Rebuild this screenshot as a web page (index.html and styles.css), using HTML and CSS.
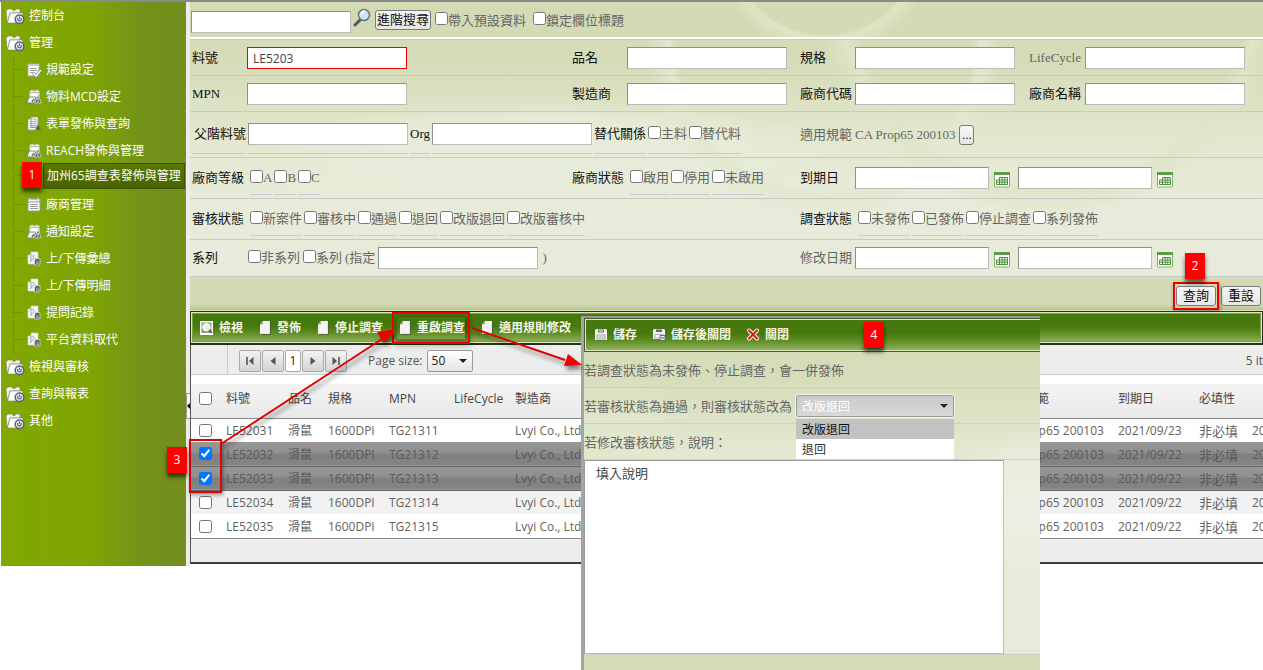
FILE: index.html
```html
<!DOCTYPE html>
<html lang="zh-Hant">
<head>
<meta charset="utf-8">
<title>加州65調查表發佈與管理</title>
<link rel="stylesheet" href="styles.css">
</head>
<body>
<svg class="defs" width="0" height="0" aria-hidden="true">
  <symbol id="i-folder" viewBox="0 0 20 18">
    <path d="M1 4 L3 2 H7 L8 3.5 H10 L11 2 H15 V6 H5 L3 14 H2Z" fill="#f2f2ee" stroke="#7b8360" stroke-width=".6"/>
    <path d="M5 6 H18 L16 16 H2.5Z" fill="#fff" stroke="#7b8360" stroke-width=".6"/>
    <circle cx="14.5" cy="12.3" r="4.3" fill="#e4e7ee" stroke="#5b647a" stroke-width="1.6"/>
    <path d="M12.8 11 V13 Q14.5 14.6 16.2 13 V11 M14.5 9.6 V12" fill="none" stroke="#5b647a" stroke-width="1.1"/>
  </symbol>
  <symbol id="i-check" viewBox="0 0 16 16">
    <path d="M2 2 H13 V14 H2Z" fill="#fff" stroke="#aaa" /><path d="M2 2 H13 V4 H2Z" fill="#c8c8c8"/>
    <path d="M4 6.5 H11 M4 8.5 H11 M4 10.5 H8" stroke="#999"/>
    <path d="M7 11 L10 14 L15 8" fill="none" stroke="#777" stroke-width="3"/><path d="M7 11 L10 14 L15 8" fill="none" stroke="#fff" stroke-width="1.7"/>
  </symbol>
  <symbol id="i-warn" viewBox="0 0 16 16">
    <path d="M4 2 H13 V9 H4Z" fill="#fff" stroke="#ddd"/><path d="M4 3.5 H13" stroke="#bbb" stroke-width="1.5"/><path d="M6 .8 V3 M11 .8 V3" stroke="#eee"/>
    <path d="M3 8 H10 L8 14 H1Z" fill="#f4f4f4" stroke="#777" stroke-width=".8"/><path d="M8 10 L6 13" stroke="#555" stroke-width="1.3"/>
    <path d="M12 6 L15.5 14 H8.5Z" fill="#666d7a" stroke="#ddd" stroke-width=".7"/><path d="M12 9 V11.5 M12 12.3 V13.3" stroke="#fff"/>
  </symbol>
  <symbol id="i-pages" viewBox="0 0 16 16">
    <path d="M5 1 H12 V11 H5Z M2 3 H10 V14 H2Z" fill="#fff" stroke="#999" stroke-width=".8"/>
    <path d="M4 5.5 H9 M4 7.5 H9 M4 9.5 H9 M4 11.5 H9" stroke="#888" stroke-width=".8"/><path d="M9.5 14 L12 8 L15 14Z" fill="#5d6470"/>
  </symbol>
  <symbol id="i-list" viewBox="0 0 16 16">
    <path d="M2 2 H14 V14 H2Z" fill="#fff" stroke="#999"/><path d="M2 2 H14 V5 H2Z" fill="#eee" stroke="#999"/><path d="M4 1 V3 M12 1 V3" stroke="#ddd"/>
    <path d="M4 7.5 H12 M4 9.5 H12 M4 11.5 H12" stroke="#999"/>
  </symbol>
  <symbol id="i-transfer" viewBox="0 0 16 16">
    <path d="M5 1 H12 V10 H5Z M2 4 H9 V13 H2Z" fill="#fff" stroke="#ccc" stroke-width=".8"/>
    <circle cx="6" cy="6.5" r="1.8" fill="none" stroke="#999" stroke-width=".8"/><path d="M4 11 L6 8.5" stroke="#999"/>
    <path d="M9.5 7.5 H14 V14 H8.5 V10Z" fill="#5d6470" stroke="#ddd" stroke-width=".7"/><path d="M10 11 H13 M10 12.6 H13" stroke="#ccc" stroke-width=".7"/>
  </symbol>
  <symbol id="i-view" viewBox="0 0 16 16">
    <path d="M1 1 H14 V15 H1Z" fill="#fff"/><path d="M2.5 2.5 H12.5 V13 H2.5Z" fill="#8b9a78"/>
    <circle cx="7.5" cy="7.2" r="3.8" fill="#eee" stroke="#fff"/><path d="M10 10 L13 13" stroke="#555" stroke-width="1.6"/>
  </symbol>
  <symbol id="i-doc" viewBox="0 0 16 16">
    <path d="M6 1 H13 V14 H3 V4.5Z" fill="#f5f5f5"/><path d="M6 1 V4.5 H3Z" fill="#a9b298"/><path d="M13.4 2 V14.4 H4" fill="none" stroke="#4a5838" stroke-width=".8"/>
  </symbol>
  <symbol id="i-save" viewBox="0 0 16 16">
    <path d="M3 2 H13 L14 3 V13 H2 V3Z" fill="#f3f3f3"/><path d="M5 2.5 H11 V5.5 H5Z" fill="#667"/><path d="M7 3 V5 M9 3 V5" stroke="#fff"/><path d="M4 8 H12 V12 H4Z" fill="#fff" stroke="#88907f" stroke-width=".8"/><path d="M5 10 H11" stroke="#88907f" stroke-width=".8"/>
  </symbol>
  <symbol id="i-saveclose" viewBox="0 0 16 16">
    <path d="M3 2 H13 L14 3 V12 H2 V3Z" fill="#f3f3f3"/><path d="M5 2.5 H11 V5 H5Z" fill="#667"/><path d="M4 7.5 H12 V11 H4Z" fill="#fff" stroke="#99a" stroke-width=".8"/><path d="M9 8.5 H14 V13.5 H9Z" fill="#eee" stroke="#556" stroke-width=".8"/><path d="M10.3 9.8 L12.7 12.2 M12.7 9.8 L10.3 12.2" stroke="#556" stroke-width=".8"/>
  </symbol>
  <symbol id="i-close" viewBox="0 0 16 16">
    <path d="M4 3.5 L12 11.5 M12 3.5 L4 11.5" stroke="#fff" stroke-width="4" stroke-linecap="round"/><path d="M4 3.5 L12 11.5 M12 3.5 L4 11.5" stroke="#d51f14" stroke-width="2.2" stroke-linecap="round"/>
  </symbol>
  <symbol id="i-cal" viewBox="0 0 16 16">
    <rect x=".5" y=".5" width="15" height="14.5" rx="1" fill="#fff" stroke="#7bb068"/><path d="M0 0 H16 V3 H0Z" fill="#5b9b49"/>
    <path d="M5.5 5.5 H13.5 V12.5 H2.5 V8 H13.5 M2.5 10.2 H13.5 M5.5 5.5 V12.5 M8.2 5.5 V12.5 M10.8 5.5 V12.5" fill="none" stroke="#4c8f3c" stroke-width="1"/>
  </symbol>
</svg>

<div class="page">
  <div class="frame">
    <nav class="side">
      <ul class="tree">
        <li><a href="#"><svg class="fold"><use href="#i-folder"/></svg>控制台</a></li>
        <li><a href="#"><svg class="fold"><use href="#i-folder"/></svg>管理</a>
          <ul class="sub">
            <li><a href="#"><svg class="ico"><use href="#i-check"/></svg><span>規範設定</span></a></li>
            <li><a href="#"><svg class="ico"><use href="#i-warn"/></svg><span>物料MCD設定</span></a></li>
            <li><a href="#"><svg class="ico"><use href="#i-pages"/></svg><span>表單發佈與查詢</span></a></li>
            <li><a href="#"><svg class="ico"><use href="#i-warn"/></svg><span>REACH發佈與管理</span></a></li>
            <li class="current"><a href="#"><svg class="ico"><use href="#i-warn"/></svg><span>加州65調查表發佈與管理</span></a><b class="badge b1">1</b></li>
            <li><a href="#"><svg class="ico"><use href="#i-list"/></svg><span>廠商管理</span></a></li>
            <li><a href="#"><svg class="ico"><use href="#i-warn"/></svg><span>通知設定</span></a></li>
            <li><a href="#"><svg class="ico"><use href="#i-transfer"/></svg><span>上/下傳彙總</span></a></li>
            <li><a href="#"><svg class="ico"><use href="#i-transfer"/></svg><span>上/下傳明細</span></a></li>
            <li><a href="#"><svg class="ico"><use href="#i-transfer"/></svg><span>提問記錄</span></a></li>
            <li><a href="#"><svg class="ico"><use href="#i-transfer"/></svg><span>平台資料取代</span></a></li>
          </ul>
        </li>
        <li><a href="#"><svg class="fold"><use href="#i-folder"/></svg>檢視與審核</a></li>
        <li><a href="#"><svg class="fold"><use href="#i-folder"/></svg>查詢與報表</a></li>
        <li><a href="#"><svg class="fold"><use href="#i-folder"/></svg>其他</a></li>
      </ul>
    </nav>
    <div class="splitter"><button class="handle" aria-label="收合"></button></div>

    <main class="main">
      <div class="quick">
        <input class="box" type="text" aria-label="關鍵字">
        <svg class="lens" viewBox="0 0 18 20"><path d="M8 11 L2 17" stroke="#555" stroke-width="3" stroke-linecap="round"/><circle cx="11" cy="7" r="5.5" fill="#cfe4f5" stroke="#6e7780" stroke-width="1.6"/><path d="M8 6 A4 4 0 0 1 12 3.4" fill="none" stroke="#fff" stroke-width="1.6"/></svg>
        <button class="btn">進階搜尋</button>
        <label class="chk"><input type="checkbox">帶入預設資料</label>
        <label class="chk lock"><input type="checkbox">鎖定欄位標題</label>
      </div>

      <form class="query">
        <div class="row">
          <label for="q1">料號</label><div class="cell"><input id="q1" class="box hot" type="text" value="LE5203"></div>
          <label for="q2">品名</label><div class="cell"><input id="q2" class="box" type="text"></div>
          <label for="q3">規格</label><div class="cell"><input id="q3" class="box" type="text"></div>
          <label for="q4" class="dim">LifeCycle</label><div class="cell"><input id="q4" class="box" type="text"></div>
        </div>
        <div class="row">
          <label for="q5">MPN</label><div class="cell"><input id="q5" class="box" type="text"></div>
          <label for="q6">製造商</label><div class="cell"><input id="q6" class="box" type="text"></div>
          <label for="q7">廠商代碼</label><div class="cell"><input id="q7" class="box" type="text"></div>
          <label for="q8">廠商名稱</label><div class="cell"><input id="q8" class="box" type="text"></div>
        </div>
        <div class="row tall">
          <div class="cell parent">
            <label for="q9" class="under first">父階料號</label><span class="under"><input id="q9" class="box" type="text"></span>
            <label for="q10" class="under">Org</label><span class="under"><input id="q10" class="box" type="text"></span>
            <span class="under">替代關係</span>
            <label class="chk under alt"><input type="checkbox">主料</label><label class="chk under"><input type="checkbox">替代料</label>
          </div>
          <span class="dim">適用規範</span>
          <div class="cell rest dim rule">CA Prop65 200103 <button type="button" class="btn dots">...</button></div>
        </div>
        <div class="row mid">
          <span>廠商等級</span>
          <div class="cell checks"><label class="chk under"><input type="checkbox">A</label><label class="chk under"><input type="checkbox">B</label><label class="chk under"><input type="checkbox">C</label></div>
          <span>廠商狀態</span>
          <div class="cell checks"><label class="chk under"><input type="checkbox">啟用</label><label class="chk under"><input type="checkbox">停用</label><label class="chk under"><input type="checkbox">未啟用</label></div>
          <label for="d1">到期日</label>
          <div class="cell rest dates"><input id="d1" class="box" type="text"><button type="button" class="cal" aria-label="日曆"><svg><use href="#i-cal"/></svg></button><input class="box" type="text" aria-label="到期日迄"><button type="button" class="cal" aria-label="日曆"><svg><use href="#i-cal"/></svg></button></div>
        </div>
        <div class="row mid">
          <span>審核狀態</span>
          <div class="cell checks wide"><label class="chk under"><input type="checkbox">新案件</label><label class="chk under"><input type="checkbox">審核中</label><label class="chk under"><input type="checkbox">通過</label><label class="chk under"><input type="checkbox">退回</label><label class="chk under"><input type="checkbox">改版退回</label><label class="chk under"><input type="checkbox">改版審核中</label></div>
          <span>調查狀態</span>
          <div class="cell rest checks"><label class="chk under"><input type="checkbox">未發佈</label><label class="chk under"><input type="checkbox">已發佈</label><label class="chk under"><input type="checkbox">停止調查</label><label class="chk under"><input type="checkbox">系列發佈</label></div>
        </div>
        <div class="row last">
          <span>系列</span>
          <div class="cell wide series"><label class="chk"><input type="checkbox">非系列</label><label class="chk"><input type="checkbox">系列</label><label for="s1" class="dim">(指定</label><input id="s1" class="box" type="text"><span class="dim">)</span></div>
          <label for="d3" class="dim">修改日期</label>
          <div class="cell rest dates"><input id="d3" class="box" type="text"><button type="button" class="cal" aria-label="日曆"><svg><use href="#i-cal"/></svg></button><input class="box" type="text" aria-label="修改日期迄"><button type="button" class="cal" aria-label="日曆"><svg><use href="#i-cal"/></svg></button></div>
        </div>
        <div class="actions">
          <span class="marked"><button type="button" class="btn big">查詢</button><b class="badge b2">2</b></span>
          <button type="reset" class="btn big">重設</button>
        </div>
      </form>

      <div class="bar">
        <button><svg class="ico"><use href="#i-view"/></svg>檢視</button>
        <button><svg class="ico"><use href="#i-doc"/></svg>發佈</button>
        <button><svg class="ico"><use href="#i-doc"/></svg>停止調查</button>
        <button class="ring"><svg class="ico"><use href="#i-doc"/></svg>重啟調查</button>
        <button><svg class="ico"><use href="#i-doc"/></svg>適用規則修改</button>
      </div>

      <section class="grid">
        <div class="pager">
          <span class="gutter"></span>
          <button aria-label="首頁"><svg viewBox="0 0 10 10"><path d="M2 1 V9" stroke="#555" stroke-width="1.6"/><path d="M8.5 1 V9 L4 5Z" fill="#555"/></svg></button>
          <button aria-label="上一頁"><svg viewBox="0 0 10 10"><path d="M7.5 1 V9 L2.5 5Z" fill="#555"/></svg></button>
          <button class="on">1</button>
          <button aria-label="下一頁"><svg viewBox="0 0 10 10"><path d="M2.5 1 V9 L7.5 5Z" fill="#555"/></svg></button>
          <button aria-label="末頁"><svg viewBox="0 0 10 10"><path d="M8 1 V9" stroke="#555" stroke-width="1.6"/><path d="M1.5 1 V9 L6 5Z" fill="#555"/></svg></button>
          <label for="ps">Page size:</label>
          <select id="ps" class="size"><option>50</option></select>
          <span class="count">5 it</span>
        </div>
        <div class="scroll">
          <table>
            <colgroup><col class="c1"><col class="c2"><col class="c3"><col class="c4"><col class="c5"><col class="c6"><col><col class="c8"><col class="c9"><col class="c10"><col class="c11"></colgroup>
            <thead><tr><th><input type="checkbox" aria-label="全選"></th><th>料號</th><th>品名</th><th>規格</th><th>MPN</th><th>LifeCycle</th><th>製造商</th><th>適用規範</th><th>到期日</th><th>必填性</th><th></th></tr></thead>
            <tbody>
              <tr><td><input type="checkbox" aria-label="LE52031"></td><td>LE52031</td><td>滑鼠</td><td>1600DPI</td><td>TG21311</td><td></td><td>Lvyi Co., Ltd.</td><td>CA Prop65 200103</td><td>2021/09/23</td><td class="req">非必填</td><td>20</td></tr>
              <tr class="sel"><td><input type="checkbox" checked aria-label="LE52032"></td><td>LE52032</td><td>滑鼠</td><td>1600DPI</td><td>TG21312</td><td></td><td>Lvyi Co., Ltd.</td><td>CA Prop65 200103</td><td>2021/09/22</td><td class="req">非必填</td><td>20</td></tr>
              <tr class="sel"><td><input type="checkbox" checked aria-label="LE52033"></td><td>LE52033</td><td>滑鼠</td><td>1600DPI</td><td>TG21313</td><td></td><td>Lvyi Co., Ltd.</td><td>CA Prop65 200103</td><td>2021/09/22</td><td class="req">非必填</td><td>20</td></tr>
              <tr class="odd"><td><input type="checkbox" aria-label="LE52034"></td><td>LE52034</td><td>滑鼠</td><td>1600DPI</td><td>TG21314</td><td></td><td>Lvyi Co., Ltd.</td><td>CA Prop65 200103</td><td>2021/09/22</td><td class="req">非必填</td><td>20</td></tr>
              <tr><td><input type="checkbox" aria-label="LE52035"></td><td>LE52035</td><td>滑鼠</td><td>1600DPI</td><td>TG21315</td><td></td><td>Lvyi Co., Ltd.</td><td>CA Prop65 200103</td><td>2021/09/22</td><td class="req">非必填</td><td>20</td></tr>
            </tbody>
          </table>
        </div>
        <div class="foot"></div>
      </section>
    </main>
  </div>

  <section class="dialog">
    <div class="bar dbar">
      <button><svg class="ico"><use href="#i-save"/></svg>儲存</button>
      <button><svg class="ico"><use href="#i-saveclose"/></svg>儲存後關閉</button>
      <button><svg class="ico"><use href="#i-close"/></svg>關閉</button>
      <b class="badge b4">4</b>
    </div>
    <p class="line">若調查狀態為未發佈、停止調查，會一併發佈</p>
    <div class="line"><label for="st">若審核狀態為通過，則審核狀態改為</label>
      <div class="combo">
        <select id="st"><option>改版退回</option><option>退回</option></select>
        <ul class="menu"><li class="on">改版退回</li><li>退回</li></ul>
      </div>
    </div>
    <label class="line" for="memo">若修改審核狀態，說明：</label>
    <textarea id="memo">填入說明</textarea>
    <div class="tail"></div>
  </section>

  <div class="badge b3">3</div>
  <div class="pick"></div>
  <svg class="arrows" width="600" height="500" viewBox="0 0 600 500" aria-hidden="true">
    <path d="M221 444 L382 339" stroke="#e00000" stroke-width="2"/><path d="M396 329 L384 343 L377 332Z" fill="#f00000"/>
    <path d="M472 328 L565 360" stroke="#e00000" stroke-width="2"/><path d="M582 365 L564 366 L568 354Z" fill="#f00000"/>
  </svg>
</div>
</body>
</html>
```
FILE: styles.css
```css
* { box-sizing: border-box; }
body {
  margin: 0;
  background: #fff;
  font: 12px/16px "Open Sans", "Noto Sans CJK TC", sans-serif;
  color: #555;
}
ul { list-style: none; margin: 0; padding: 0; }
a { color: inherit; text-decoration: none; }
button, input, select, textarea { font: inherit; color: inherit; margin: 0; }
input[type="checkbox"] { width: 13px; height: 13px; flex: none; }
.defs { position: absolute; }
.page { position: relative; min-height: 100vh; overflow: hidden; }
.frame { display: flex; border-top: 2px solid #8a8a8a; padding-left: 1px; }
.ico { width: 16px; height: 16px; flex: none; }

/* sidebar */
.side {
  width: 185px;
  flex: none;
  background: linear-gradient(90deg, #80a800 0, #7fa503 48%, #73911b 78%, #738e1c 100%);
  color: #fff;
}
.tree a { display: flex; align-items: center; height: 27px; gap: 4px; padding-left: 4px; white-space: nowrap; }
.fold { width: 20px; height: 18px; flex: none; }
.sub { margin-left: 12px; border-left: 1px dotted #5f7d10; }
.sub li { position: relative; }
.sub a { padding-left: 11px; gap: 0; }
.sub span { padding: 4px; }
.sub a::before { content: ""; width: 9px; margin-left: -10px; margin-right: 2px; border-top: 1px dotted #5f7d10; }
.sub .current a { padding-bottom: 4px; }
.sub .current span {
  padding: 4px 3px;
  margin-left: 2px;
  background: linear-gradient(#587a00, #476300);
  outline: 1px solid #3c5200;
}

.splitter { width: 4px; flex: none; background: #ececec; display: flex; align-items: flex-start; padding-top: 391px; }
.handle { width: 4px; height: 26px; padding: 0; border: 1px solid #999; border-right: 0; background: #fafafa; display: flex; align-items: center; }
.handle::before { content: ""; border: 3px solid transparent; border-right-color: #000; border-left: 0; }

/* query form */
.main { flex: 1; min-width: 0; padding-bottom: 2px; }
.quick {
  display: flex;
  align-items: center;
  height: 37px;
  padding-left: 1px;
  background:
    radial-gradient(circle at 635px -60px, transparent 92px, #dee5c6 96px, transparent 112px),
    #d3dbb5;
  border-bottom: 2px solid #fff;
  font-size: 13px;
}
.box {
  width: 160px;
  height: 22px;
  border: 1px solid #8f8f8f;
  border-right-color: #bbb;
  border-bottom-color: #bbb;
  background: #fff;
  padding: 3px 5px 1px;
  font: 12px/16px "Open Sans", "Noto Sans CJK TC", sans-serif;
  color: #444;
}
.box.hot { border-color: #f00000; }
.quick .box { margin-top: 4px; }
.lens { width: 18px; height: 20px; margin: 0 4px 4px 2px; }
.btn {
  height: 20px;
  padding: 0 1px;
  border: 1px solid #7a7a7a;
  border-radius: 3px;
  background: linear-gradient(#f6f6f6, #e6e6e6);
  font: 13px/16px "Liberation Serif", "Noto Sans CJK TC", serif;
  color: #111;
  white-space: nowrap;
}
.chk { display: inline-flex; align-items: center; color: #666; white-space: nowrap; }
.chk input { margin-bottom: 3px; }
.quick .chk { margin-left: 4px; }
.quick .lock { margin-left: 7px; }
.query {
  font: 13px/18px "Liberation Serif", "Noto Sans CJK TC", serif;
  color: #111;
  border-top: 1px solid #c6c8c6;
  background:
    radial-gradient(circle at 635px 0, transparent 148px, #e2e8d0 156px, transparent 180px),
    radial-gradient(circle at 860px -60px, transparent 200px, #dee5c8 212px, transparent 236px),
    radial-gradient(ellipse 300px 60px at 360px 120px, #e6ecd9 60%, transparent 100%),
    linear-gradient(#d4dbb5 0, #d6ddba 30px, #e5e9d2 110px, #e8ebda 180px);
}
.row {
  display: grid;
  grid-template-columns: 55px 325fr 55px 173fr 55px 174fr 56px 178fr;
  align-items: center;
  height: 36px;
  padding-left: 2px;
  border-bottom: 1px solid #c8cac8;
  white-space: nowrap;
}
.row.tall { height: 46px; }
.row.mid { height: 41px; }
.row.last { height: 37px; }
.cell { display: flex; align-items: center; align-self: stretch; }
.dim { color: #666; }
.parent { grid-column: span 4; gap: 2px; }
.rest { grid-column: span 3; }
.wide { grid-column: span 3; }
.under {
  align-self: stretch;
  display: flex;
  align-items: center;
  margin-bottom: 3px;
  padding-top: 3px;
  border-bottom: 1px solid #cbcbd0;
}
.first { padding-left: 2px; }
.checks { gap: 2px; padding-left: 3px; }
.series { gap: 3px; padding-left: 1px; }
.series .box { margin-right: 1px; }
.rule { gap: 4px; }
.dots { width: 15px; padding: 0; }
.dates .box { width: 134px; }
.cal { width: 16px; height: 16px; padding: 0; border: 0; background: none; margin: 3px 8px 0 5px; }
.cal svg { width: 16px; height: 16px; display: block; }
.actions {
  display: flex;
  justify-content: flex-end;
  align-items: center;
  gap: 2px;
  height: 34px;
  padding: 3px 2px 0 0;
  background: linear-gradient(#d3dab5 80%, #bcc791 96%, #eef0da);
}
.big { padding: 0 6px; }
.marked { position: relative; border: 2px solid #f00000; padding: 2px 1px; display: flex; box-shadow: 1px 2px 4px #0006; }

/* toolbars */
.bar {
  display: flex;
  align-items: center;
  gap: 14px;
  height: 34px;
  padding: 1px 0 0 8px;
  border: 1px solid #26301c;
  border-bottom-width: 2px;
  box-shadow: inset 0 0 0 1px #dfe8bf, inset 0 0 0 2px #7ea043;
  background: linear-gradient(#46790d 45%, #5b8a20 65%, #94b463);
  position: relative;
}
.bar button {
  display: flex;
  align-items: center;
  gap: 4px;
  padding: 0;
  border: 0;
  background: none;
  color: #f4f7ea;
  font-weight: 600;
  white-space: nowrap;
}
.bar button.ring { outline: 2px solid #f00000; outline-offset: 3px; padding: 3px 0; box-shadow: 2px 3px 6px 3px #0005; }
.grid { border-left: 1px solid #555; border-bottom: 2px solid #3e3e3e; }
.pager { display: flex; align-items: center; height: 30px; background: #ededed; border-bottom: 1px solid #ccc; overflow: hidden; padding-top: 3px; }
.gutter { width: 37px; align-self: stretch; border-right: 1px solid #ccc; margin: -3px 11px 0 0; flex: none; }
.pager button {
  width: 22px;
  height: 22px;
  margin-right: 1px;
  padding: 0;
  display: flex;
  align-items: center;
  justify-content: center;
  border: 1px solid #aaa;
  border-radius: 2px;
  background: linear-gradient(#f3f3f3, #d4d4d4);
}
.pager button.on { width: 16px; background: #fff; color: #222; }
.pager button svg { width: 10px; height: 10px; }
.pager label { margin: 0 4px 0 20px; white-space: nowrap; }
.size, .combo select {
  appearance: none;
  border: 1px solid #999;
  background: url("data:image/svg+xml,%3Csvg xmlns='http://www.w3.org/2000/svg' width='8' height='4'%3E%3Cpath d='M0 0h8L4 4z' fill='%23222'/%3E%3C/svg%3E") no-repeat right 5px center, linear-gradient(#fff, #e4e4e4);
}
.size { width: 46px; height: 22px; padding: 0 4px; border-radius: 2px; color: #222; }
.count { margin-left: auto; white-space: nowrap; }
.scroll { overflow: hidden; border-top: 9px solid #fff; }
table { width: calc(100% + 60px); table-layout: fixed; border-collapse: collapse; }
.c1 { width: 35px; } .c2 { width: 62px; } .c3 { width: 40px; } .c4 { width: 61px; } .c5 { width: 65px; } .c6 { width: 61px; }
.c8 { width: 117px; } .c9 { width: 81px; } .c10 { width: 53px; } .c11 { width: 71px; }
th, td { padding: 0; text-align: left; font-weight: 400; white-space: nowrap; }
th { height: 34px; padding-bottom: 4px; background: linear-gradient(#f4f4f4, #e9e9e9); border-bottom: 1px solid #888; color: #444; }
td { height: 24px; padding-top: 2px; color: #636363; }
th:first-child, td:first-child { padding-left: 8px; padding-top: 0; }
th input, td input { display: block; }
.req { font-size: 13px; }
.odd { background: #f2f2f2; }
.sel { background: linear-gradient(#979797, #909090 45%, #808080 55%, #858585); border-bottom: 1px solid #666; }
.sel td { color: #5a5a5a; }
.foot { height: 24px; background: #ededed; border-top: 1px solid #888; }

/* dialog over the grid */
.dialog {
  position: absolute;
  left: 581px;
  top: 316px;
  bottom: 0;
  width: 459px;
  display: flex;
  flex-direction: column;
  border-left: 3px solid #a2a5a0;
  border-top: 2px solid #999;
  font-size: 13px;
  color: #666;
  background:
    radial-gradient(circle at 440px 190px, #edf0e2 20px, transparent 80px),
    radial-gradient(circle at 30px 140px, #e2e8cd 10px, transparent 90px),
    linear-gradient(#d4dbb5 0, #d6ddba 60px, #e6ead5 150px, #e8ebda 335px, #d4dbb5 337px);
}
.dbar { flex: none; padding-top: 0; font-size: 12px; border-right: 0; box-shadow: inset 0 1px #dfe8bf, inset 1px 0 #dfe8bf, inset 0 -1px #dfe8bf; border-bottom-width: 1px; border-color: #4a5a35; }
.line { display: flex; align-items: center; margin: 0; height: 36px; flex: none; border-bottom: 1px solid #ccd0cc; white-space: nowrap; }
.combo { position: relative; margin-left: 4px; }
.combo select { display: block; width: 158px; height: 22px; padding: 2px 5px 0; font-size: 12px; color: #fff; background-color: #ccc; background-image: url("data:image/svg+xml,%3Csvg xmlns='http://www.w3.org/2000/svg' width='8' height='4'%3E%3Cpath d='M0 0h8L4 4z' fill='%23222'/%3E%3C/svg%3E"), linear-gradient(#c9c9c9, #d8d8d8); outline: 1px solid #f4f6ec; border-radius: 2px; }
.menu { position: absolute; left: 0; right: 0; top: 24px; background: #fff; color: #333; font-size: 12px; }
.menu li { height: 20px; line-height: 22px; padding-left: 6px; }
.menu .on { background: #c2c2c2; color: #111; }
.dialog textarea { width: 420px; height: 194px; flex: none; resize: none; border: 1px solid #999; border-right-color: #bbb; border-bottom-color: #bbb; background: #fff; padding: 4px 11px; color: #444; }
.tail { border-top: 1px solid #ccd0cc; }

/* step markers */
.badge {
  position: absolute;
  width: 20px;
  height: 26px;
  background: #f00;
  color: #fff;
  font: 12px/26px "Open Sans", sans-serif;
  text-align: center;
  box-shadow: 0 4px 4px #0009;
  z-index: 3;
}
.b1 { left: 8px; top: -2px; }
.b2 { left: 10px; top: -31px; }
.b3 { left: 167px; top: 447px; }
.b4 { left: 279px; top: 3px; }
.pick { position: absolute; left: 189px; top: 439px; width: 33px; height: 54px; border: 2px solid #e00000; box-shadow: 1px 2px 4px #0006; }
.arrows { position: absolute; left: 0; top: 0; pointer-events: none; filter: drop-shadow(2px 4px 2px #0007); }
```
